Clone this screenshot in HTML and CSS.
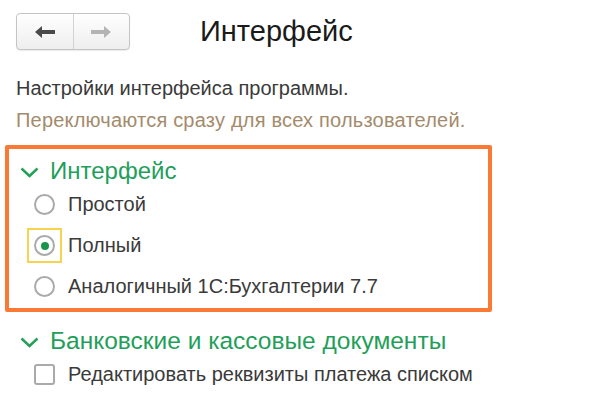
FILE: index.html
```html
<!DOCTYPE html>
<html lang="ru">
<head>
<meta charset="utf-8">
<title>Интерфейс</title>
<link rel="stylesheet" href="styles.css">
</head>
<body>
<div class="page">
  <header class="topbar">
    <div class="nav">
      <button class="nav-btn back" aria-label="Назад">
        <svg width="22" height="14" viewBox="0 0 22 14"><path d="M1 7 L8 1 L8 5 L21 5 L21 9 L8 9 L8 13 Z" fill="#4a4a4a"/></svg>
      </button>
      <button class="nav-btn fwd" aria-label="Вперёд">
        <svg width="22" height="14" viewBox="0 0 22 14"><path d="M21 7 L14 1 L14 5 L1 5 L1 9 L14 9 L14 13 Z" fill="#b4b4b4"/></svg>
      </button>
    </div>
    <h1 class="title">Интерфейс</h1>
  </header>

  <p class="desc">Настройки интерфейса программы.</p>
  <p class="desc note">Переключаются сразу для всех пользователей.</p>

  <section class="group highlighted">
    <div class="group-head">
      <svg class="chev" width="19" height="11" viewBox="0 0 19 11"><path d="M1.5 1.5 L9.5 9 L17.5 1.5" fill="none" stroke="#23a055" stroke-width="2.4"/></svg>
      <span>Интерфейс</span>
    </div>
    <div class="option">
      <span class="radio-wrap"><span class="radio"></span></span>
      <span>Простой</span>
    </div>
    <div class="option">
      <span class="radio-wrap focus"><span class="radio checked"></span></span>
      <span>Полный</span>
    </div>
    <div class="option">
      <span class="radio-wrap"><span class="radio"></span></span>
      <span>Аналогичный 1С:Бухгалтерии 7.7</span>
    </div>
  </section>

  <section class="group second">
    <div class="group-head">
      <svg class="chev" width="19" height="11" viewBox="0 0 19 11"><path d="M1.5 1.5 L9.5 9 L17.5 1.5" fill="none" stroke="#23a055" stroke-width="2.4"/></svg>
      <span>Банковские и кассовые документы</span>
    </div>
    <div class="option">
      <span class="radio-wrap"><span class="checkbox"></span></span>
      <span>Редактировать реквизиты платежа списком</span>
    </div>
  </section>
</div>
</body>
</html>
```

FILE: styles.css
```css
html, body {
  margin: 0;
  padding: 0;
  background: #ffffff;
}
body {
  font-family: "Liberation Sans", Arial, sans-serif;
  color: #3a3a3a;
}
.page {
  padding: 13px 0 0 0;
}
.topbar {
  display: flex;
  align-items: center;
  padding-left: 16px;
  height: 37px;
}
.nav {
  display: flex;
  width: 114px;
  height: 37px;
  box-sizing: border-box;
  border: 1px solid #c4c4c4;
  border-radius: 4px;
  background: linear-gradient(#ffffff, #eeeeee);
  box-shadow: 0 1px 1px rgba(0,0,0,0.08);
  overflow: hidden;
}
.nav-btn {
  flex: 1;
  border: 0;
  background: transparent;
  padding: 0;
  display: flex;
  align-items: center;
  justify-content: center;
}
.nav-btn.back {
  border-right: 1px solid #d2d2d2;
}
.title {
  margin: 0 0 0 70px;
  font-weight: normal;
  font-size: 29px;
  color: #1a1a1a;
}
.desc {
  margin: 0;
  padding-left: 16px;
  font-size: 20px;
  line-height: 32px;
}
.desc:first-of-type {
  margin-top: 22px;
}
.note {
  color: #a48b6c;
  letter-spacing: 0.2px;
}
.group {
  margin-left: 5px;
  width: 487px;
  box-sizing: border-box;
  border: 4px solid transparent;
  padding: 9px 0 1px 0;
}
.group.highlighted {
  margin-top: 9px;
  border-color: #fa7a35;
  border-radius: 2px;
}
.group.second {
  padding-top: 12px;
}
.group-head {
  display: flex;
  align-items: center;
  gap: 11px;
  padding-left: 11px;
  height: 26px;
  font-size: 24px;
  color: #1f9f5a;
}
.chev {
  margin-top: 2px;
}
.group.second .group-head {
  font-size: 24.5px;
}
.option {
  display: flex;
  align-items: center;
  height: 41px;
  padding-left: 18px;
  font-size: 20px;
  color: #3a3a3a;
}
.radio-wrap {
  width: 35px;
  height: 35px;
  box-sizing: border-box;
  display: flex;
  align-items: center;
  justify-content: center;
  border: 2px solid transparent;
  margin-right: 6px;
}
.radio-wrap.focus {
  border-color: #f7d34f;
}
.radio {
  width: 21px;
  height: 21px;
  box-sizing: border-box;
  border: 2px solid #aaaaaa;
  border-radius: 50%;
  background: #fff;
  display: flex;
  align-items: center;
  justify-content: center;
}
.radio.checked::after {
  content: "";
  width: 8px;
  height: 8px;
  border-radius: 50%;
  background: #18954d;
}
.checkbox {
  width: 21px;
  height: 21px;
  box-sizing: border-box;
  border: 2px solid #aaaaaa;
  border-radius: 3px;
  background: #fff;
}
```
